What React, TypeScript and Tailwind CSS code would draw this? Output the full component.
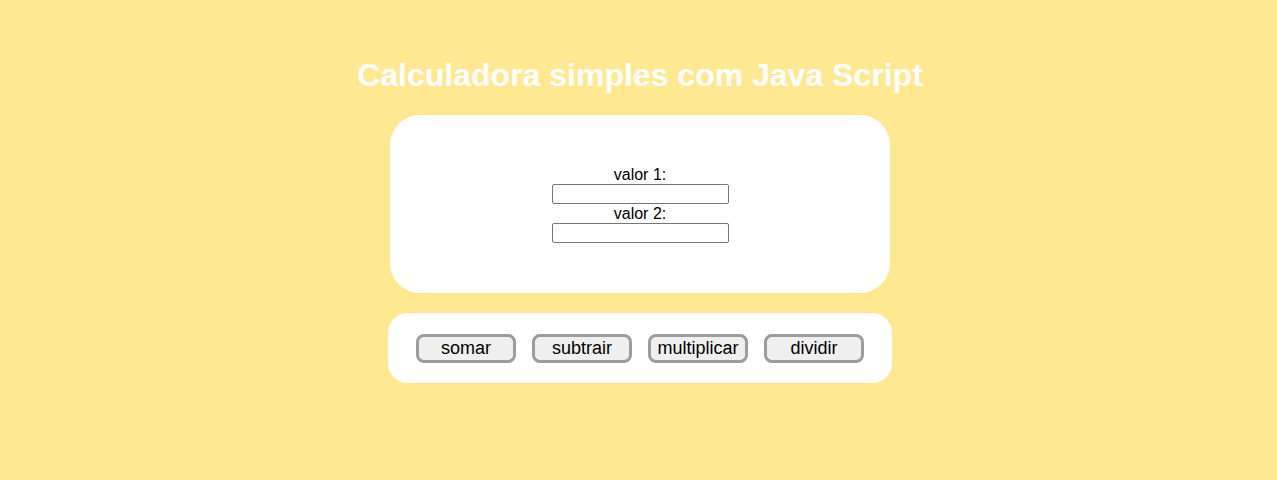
import React from 'react';

const App = () => {
  const botoes = ['somar', 'subtrair', 'multiplicar', 'dividir'];

  return (
    <div className="min-h-[480px] w-full pl-[3px] bg-[#fee992] flex flex-col items-center font-['Liberation_Sans',Arial,sans-serif]">
      <h1 className="mt-[57px] text-[32px] leading-[37px] font-bold text-white">
        Calculadora simples com Java Script
      </h1>

      {/* campos */}
      <div className="mt-[21px] w-[500px] h-[178px] bg-white rounded-[30px] flex flex-col items-center justify-center">
        <label htmlFor="valor1" className="block text-base leading-[19px] text-black">
          valor 1:
        </label>
        <input
          id="valor1"
          type="text"
          className="w-[177px] h-[20px] border border-[#767676] rounded-[2px] bg-white"
        />
        <label htmlFor="valor2" className="block text-base leading-[19px] text-black">
          valor 2:
        </label>
        <input
          id="valor2"
          type="text"
          className="w-[177px] h-[20px] border border-[#767676] rounded-[2px] bg-white"
        />
      </div>

      {/* operações */}
      <div className="mt-[20px] w-[504px] h-[70px] bg-white rounded-[20px] flex items-center justify-center gap-[16px]">
        {botoes.map((b) => (
          <button
            key={b}
            className="w-[100px] h-[29px] border-[3px] border-[#9c9c9c] rounded-[8px] bg-[#efefef] text-[18px] leading-none text-black flex items-center justify-center"
          >
            {b}
          </button>
        ))}
      </div>
    </div>
  );
};

export default App;
